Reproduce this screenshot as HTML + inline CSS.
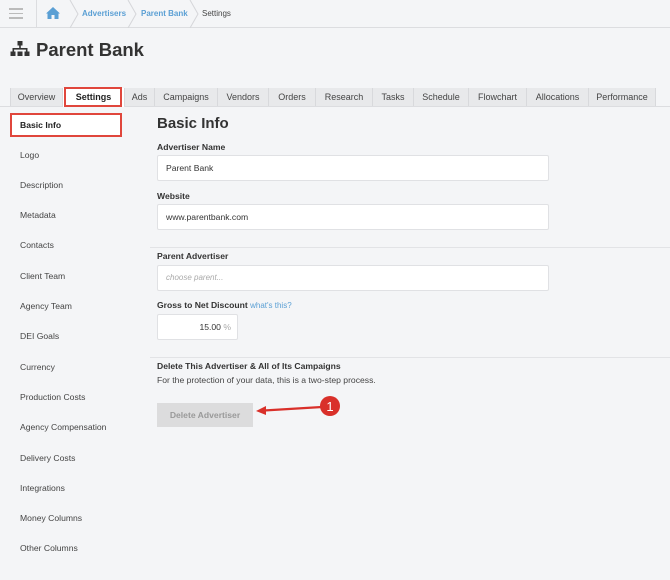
<!DOCTYPE html>
<html><head><style>
*{box-sizing:border-box;margin:0;padding:0}
body{width:670px;height:580px;background:#f4f5f7;font-family:"Liberation Sans",sans-serif;color:#333;position:relative;overflow:hidden}
.a{position:absolute}
.hdr{left:0;top:0;width:670px;height:28px;border-bottom:1px solid #dcdde0;background:#f4f5f7}
.bc{font-size:8px;top:9px}
.tab{position:absolute;top:88px;height:18px;background:#e8e9eb;border-left:1px solid #d8d9dc;font-size:9px;color:#444;text-align:center;line-height:18px}
.side{position:absolute;left:20px;font-size:8.6px;color:#444}
.lbl{position:absolute;left:157px;font-size:8.6px;font-weight:bold;color:#333}
.inp{position:absolute;left:157px;width:392px;height:26px;background:#fff;border:1px solid #e0e1e4;border-radius:2px;font-size:8.6px;line-height:24px;padding-left:8px;color:#333}
.hr{position:absolute;left:150px;width:520px;height:1px;background:#e2e3e6}
</style></head><body>
<div class="a hdr"></div>
<div class="a" style="left:9px;top:8px;width:14px;height:1.5px;background:#bbb"></div>
<div class="a" style="left:9px;top:12.5px;width:14px;height:1.5px;background:#bbb"></div>
<div class="a" style="left:9px;top:17px;width:14px;height:1.5px;background:#bbb"></div>
<div class="a" style="left:36px;top:0;width:1px;height:28px;background:#dcdde0"></div>
<svg class="a" style="left:45px;top:6px" width="16" height="14" viewBox="0 0 16 14"><path d="M8 1 L1 7.5 L2.5 7.5 L2.5 13 L6.5 13 L6.5 9 L9.5 9 L9.5 13 L13.5 13 L13.5 7.5 L15 7.5 Z" fill="#5a9fd4"/></svg>
<svg class="a" style="left:68px;top:0" width="140" height="28"><path d="M2 0 L10 14 L2 28 M60 0 L68 14 L60 28 M122 0 L130 14 L122 28" stroke="#d5d6d9" fill="none"/></svg>
<div class="a bc" style="left:82px;color:#5a9fd4;font-weight:bold">Advertisers</div>
<div class="a bc" style="left:141px;color:#5a9fd4;font-weight:bold">Parent Bank</div>
<div class="a bc" style="left:202px;color:#444">Settings</div>
<svg class="a" style="left:10px;top:41px" width="20" height="16" viewBox="0 0 20 16"><rect x="7.5" y="0" width="5" height="4.5" fill="#333"/><rect x="9.2" y="4" width="1.6" height="4" fill="#333"/><rect x="2.5" y="7" width="15" height="1.6" fill="#333"/><rect x="2.5" y="7" width="1.6" height="4" fill="#333"/><rect x="15.9" y="7" width="1.6" height="4" fill="#333"/><rect x="0.5" y="10.5" width="5" height="4.5" fill="#333"/><rect x="7.5" y="10.5" width="5" height="4.5" fill="#333"/><rect x="14.5" y="10.5" width="5" height="4.5" fill="#333"/></svg>
<div class="a" style="left:36px;top:39px;font-size:18.5px;font-weight:bold;color:#333">Parent Bank</div>
<div class="a" style="left:0;top:106px;width:670px;height:1px;background:#dcdde0"></div>
<div class="tab" style="left:10px;width:52px">Overview</div>
<div class="tab" style="left:62px;width:62px;background:#fff;font-weight:bold;color:#222;height:19px">Settings</div>
<div class="tab" style="left:124px;width:30px">Ads</div>
<div class="tab" style="left:154px;width:63px">Campaigns</div>
<div class="tab" style="left:217px;width:51px">Vendors</div>
<div class="tab" style="left:268px;width:47px">Orders</div>
<div class="tab" style="left:315px;width:57px">Research</div>
<div class="tab" style="left:372px;width:41px">Tasks</div>
<div class="tab" style="left:413px;width:55px">Schedule</div>
<div class="tab" style="left:468px;width:58px">Flowchart</div>
<div class="tab" style="left:526px;width:62px">Allocations</div>
<div class="tab" style="left:588px;width:68px;border-right:1px solid #d8d9dc">Performance</div>
<div class="a" style="left:64px;top:87px;width:58px;height:20px;border:2px solid #e0463c"></div>
<div class="a" style="left:10px;top:113px;width:112px;height:24px;border:2px solid #e0463c;background:#fff"></div>
<div class="side" style="top:120px;font-weight:bold;color:#222">Basic Info</div>
<div class="side" style="top:150px">Logo</div>
<div class="side" style="top:180px">Description</div>
<div class="side" style="top:210px">Metadata</div>
<div class="side" style="top:240px">Contacts</div>
<div class="side" style="top:271px">Client Team</div>
<div class="side" style="top:301px">Agency Team</div>
<div class="side" style="top:331px">DEI Goals</div>
<div class="side" style="top:362px">Currency</div>
<div class="side" style="top:392px">Production Costs</div>
<div class="side" style="top:422px">Agency Compensation</div>
<div class="side" style="top:453px">Delivery Costs</div>
<div class="side" style="top:483px">Integrations</div>
<div class="side" style="top:513px">Money Columns</div>
<div class="side" style="top:543px">Other Columns</div>
<div class="a" style="left:157px;top:115px;font-size:15px;font-weight:bold;color:#333">Basic Info</div>
<div class="lbl" style="top:142px">Advertiser Name</div>
<div class="inp" style="top:155px">Parent Bank</div>
<div class="lbl" style="top:191px">Website</div>
<div class="inp" style="top:204px">www.parentbank.com</div>
<div class="hr" style="top:247px"></div>
<div class="lbl" style="top:251px">Parent Advertiser</div>
<div class="inp" style="top:265px;font-style:italic;color:#aaa;font-size:8px">choose parent...</div>
<div class="lbl" style="top:300px">Gross to Net Discount <span style="font-weight:normal;color:#5a9fd4;font-size:8px">what's this?</span></div>
<div class="inp" style="top:314px;width:81px;text-align:right;padding-right:6px">15.00 <span style="color:#aaa">%</span></div>
<div class="hr" style="top:357px"></div>
<div class="lbl" style="top:361px">Delete This Advertiser &amp; All of Its Campaigns</div>
<div class="a" style="left:157px;top:375px;font-size:8.6px;color:#444">For the protection of your data, this is a two-step process.</div>
<div class="a" style="left:157px;top:403px;width:96px;height:24px;background:#dcdcdd;color:#999;font-size:8.6px;font-weight:bold;text-align:center;line-height:24px">Delete Advertiser</div>
<svg class="a" style="left:250px;top:394px" width="95" height="30"><path d="M72 13 L14 16.5" stroke="#d9302a" stroke-width="2.2"/><path d="M6 17 L16 12 L16 21 Z" fill="#d9302a"/><circle cx="80" cy="12" r="10" fill="#d9302a"/><text x="80" y="17" font-size="13" fill="#fff" text-anchor="middle" font-family="Liberation Sans">1</text></svg>
</body></html>
